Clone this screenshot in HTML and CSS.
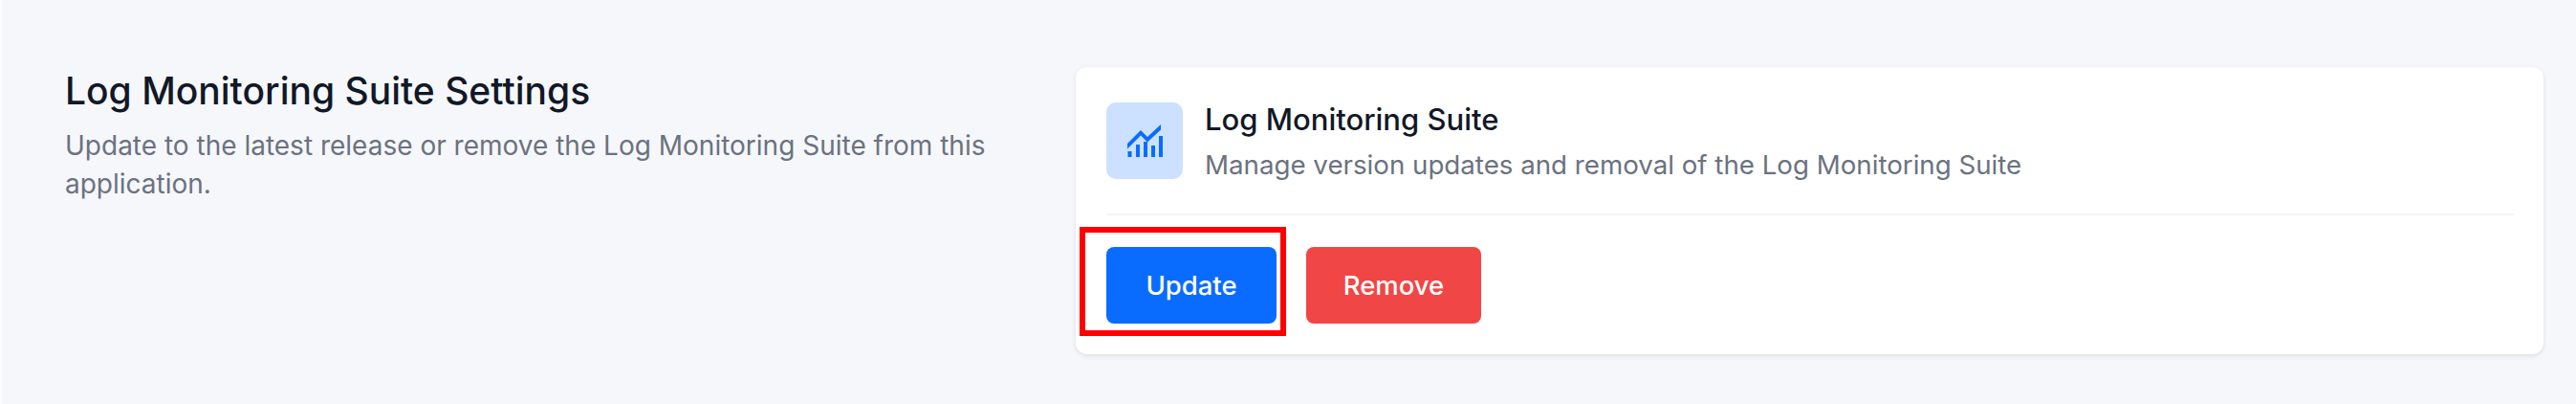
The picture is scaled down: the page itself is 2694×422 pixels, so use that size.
FILE: index.html
```html
<!DOCTYPE html>
<html lang="en">
<head>
    <meta charset="UTF-8">
    <title>Log Monitoring Suite Settings</title>
    <link rel="stylesheet" href="styles.css">
</head>
<body>
    <div class="settings">
        <div class="intro">
            <h2>Log Monitoring Suite Settings</h2>
            <p>Update to the latest release or remove the Log Monitoring Suite from this application.</p>
        </div>
        <div class="card">
            <div class="card-head">
                <div class="card-icon">
                    <svg width="38" height="36" viewBox="0 0 38 36" fill="none">
                        <path d="M1 21 L15 7 L22 14 L36 1 V6.500 L22 19.500 L15 12.500 L1 26.500 Z" fill="#0a6cff"/>
                        <path d="M1.500 29 h4 v6 h-4 z M10 22 h4 v13 h-4 z M18 19 h4 v16 h-4 z M26 23 h4 v12 h-4 z M34 13 h4 v22 h-4 z" fill="#0a6cff"/>
                    </svg>
                </div>
                <div>
                    <h3>Log Monitoring Suite</h3>
                    <p>Manage version updates and removal of the Log Monitoring Suite</p>
                </div>
            </div>
            <div class="actions">
                <button class="btn btn-update">Update</button>
                <button class="btn btn-remove">Remove</button>
                <div class="highlight"></div>
            </div>
        </div>
    </div>
</body>
</html>
```

FILE: styles.css
```css
* { box-sizing: border-box; }
body { margin: 0; height: 422px; overflow: hidden; background: #f6f7fb; border-left: 2px solid #fbfcfd; font-family: Inter, "Liberation Sans", sans-serif; }
.settings { display: flex; padding: 70px 34px 0 66px; }
.intro { width: 1057px; padding-top: 3px; }
.intro h2 { margin: 0; font-size: 39px; line-height: 44px; font-weight: 500; color: #111827; }
.intro p { margin: 15px 0 0; width: 980px; font-size: 28px; line-height: 40px; color: #6b7280; }
.card { flex: 1; height: 300px; padding: 37px 31px 0 32px; background: #fff; border-radius: 12px; box-shadow: 0 2px 5px rgba(17, 24, 39, 0.1); }
.card-head { display: flex; gap: 23px; height: 118px; border-bottom: 2px solid #f3f4f6; }
.card-icon { display: flex; align-items: center; justify-content: center; width: 80px; height: 80px; background: #cce1ff; border-radius: 10px; }
.card-head h3 { margin: 0; font-size: 31px; line-height: 36px; font-weight: 500; color: #111827; }
.card-head p { margin: 11px 0 0; font-size: 27.7px; line-height: 36px; color: #6b7280; }
.actions { position: relative; display: flex; gap: 31px; padding-top: 33px; }
.btn { height: 80px; border: 0; border-radius: 8px; font-family: inherit; font-size: 27.5px; font-weight: 500; color: #fff; }
.btn-update { width: 178px; background: #0a6cff; }
.btn-remove { width: 183px; background: #f14646; }
.highlight { position: absolute; left: -28px; top: 12px; width: 216px; height: 114px; border: 6px solid #ff0000; }
```
